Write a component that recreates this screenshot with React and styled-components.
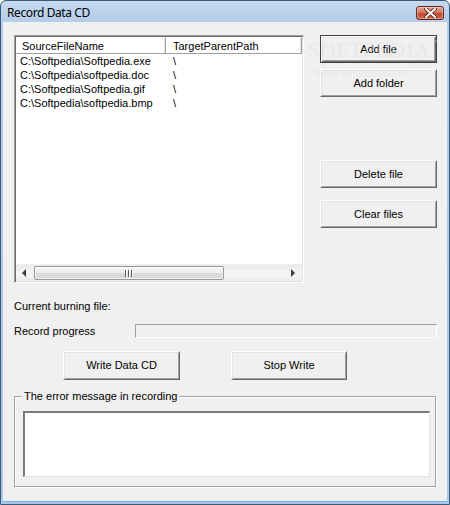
import React from "react";
import styled, { createGlobalStyle, css } from "styled-components";

const Global = createGlobalStyle`
  html, body { margin: 0; padding: 0; background: #ffffff; }
  body { font-family: "Liberation Sans", Arial, sans-serif; font-size: 11px; color: #000; }
  * { box-sizing: border-box; }
`;

const Window = styled.div`
  position: relative;
  width: 450px;
  height: 505px;
  display: flex;
  flex-direction: column;
  background: linear-gradient(#c6d9ee, #b4cce7 22px, #a9c6e8);
  border: 1px solid #3b5a7c;
  border-radius: 6px 6px 0 0;
  padding: 0 2px 2px 2px;
  overflow: hidden;
`;

const TitleBar = styled.div`
  height: 21px;
  display: flex;
  align-items: center;
  justify-content: space-between;
  padding: 0 3px 0 4px;
`;

const Title = styled.span`
  font-family: "Noto Sans", "Liberation Sans", sans-serif;
  font-size: 12px;
  letter-spacing: -0.4px;
  color: #000;
  padding-top: 2px;
`;

const CloseButton = styled.div`
  width: 28px;
  height: 14px;
  margin-top: 3px;
  border: 1px solid #6b2418;
  border-radius: 3px;
  background: linear-gradient(#e6a595, #d47a64 45%, #c14a2e 55%, #c96a4e);
  box-shadow: inset 0 0 0 1px rgba(255, 255, 255, 0.35);
  display: flex;
  align-items: center;
  justify-content: center;
`;

const Client = styled.div`
  flex: 1;
  background: #f0f0f0;
  padding: 13px 10px 0 11px;
  display: flex;
  flex-direction: column;
  border-bottom: 1px solid #72b5e4;
`;

const TopRow = styled.div`
  display: flex;
  height: 248px;
`;

const ListView = styled.div`
  width: 290px;
  height: 248px;
  background: #fff;
  border-top: 1px solid #a0a0a0;
  border-left: 1px solid #a0a0a0;
  border-right: 1px solid #ffffff;
  border-bottom: 1px solid #ffffff;
  box-shadow: inset 1px 1px 0 #696969, inset -1px -1px 0 #e3e3e3;
  padding: 1px;
  display: flex;
  flex-direction: column;
`;

const HeaderRow = styled.div`
  display: flex;
  height: 17px;
  background: #f0f0f0;
  border-bottom: 1px solid #a0a0a0;
`;

const HeaderCell = styled.div`
  width: ${(p) => p.$w}px;
  flex: ${(p) => (p.$grow ? 1 : "none")};
  padding-left: ${(p) => p.$pad}px;
  line-height: 16px;
  background: #ffffff;
  border-top: 1px solid #ffffff;
  border-right: 1px solid #a0a0a0;
  box-shadow: inset -1px 0 0 #e3e3e3;
  white-space: nowrap;
  overflow: hidden;
`;

const Rows = styled.div`
  flex: 1;
`;

const Row = styled.div`
  display: flex;
  height: 14px;
  line-height: 14px;
`;

const Cell = styled.div`
  width: ${(p) => p.$w}px;
  padding-left: ${(p) => p.$pad}px;
  white-space: nowrap;
`;

const HScroll = styled.div`
  height: 17px;
  display: flex;
  align-items: stretch;
  background: linear-gradient(#e9e9e9, #f3f3f3 40%, #f3f3f3 70%, #e9e9e9);
  border-top: 1px solid #f0f0f0;
`;

const ArrowBox = styled.div`
  width: 17px;
  display: flex;
  align-items: center;
  justify-content: center;
`;

const Track = styled.div`
  flex: 1;
  display: flex;
  align-items: stretch;
  padding: 1px 0;
`;

const Thumb = styled.div`
  width: 190px;
  margin-left: 1px;
  border: 1px solid #979797;
  border-radius: 2px;
  background: linear-gradient(#f6f6f6, #ececec 50%, #dcdcdc 51%, #d7d7d7);
  box-shadow: inset 0 0 0 1px rgba(255, 255, 255, 0.7);
  display: flex;
  align-items: center;
  justify-content: center;
`;

const Grip = styled.div`
  display: flex;
  gap: 1px;
`;

const GripLine = styled.div`
  width: 2px;
  height: 7px;
  background: #5a5a5a;
  border-right: 1px solid #ffffff;
`;

const ButtonColumn = styled.div`
  margin-left: 16px;
  width: 117px;
  display: flex;
  flex-direction: column;
`;

const Button = styled.div`
  width: ${(p) => p.$w || 117}px;
  height: ${(p) => p.$h || 28}px;
  margin-top: ${(p) => p.$mt || 0}px;
  background: #f0f0f0;
  border-top: 1px solid #ffffff;
  border-left: 1px solid #ffffff;
  border-right: 1px solid #696969;
  border-bottom: 1px solid #696969;
  box-shadow: inset 1px 1px 0 #e3e3e3, inset -1px -1px 0 #a0a0a0;
  display: flex;
  align-items: center;
  justify-content: center;
  font-size: 11px;
  padding-bottom: 1px;
  ${(p) =>
    p.$default &&
    css`
      border: 1px solid #404040;
      box-shadow: inset 1px 1px 0 #ffffff, inset -1px -1px 0 #696969,
        inset 2px 2px 0 #e3e3e3, inset -2px -2px 0 #a0a0a0;
    `}
`;

const Label = styled.div`
  margin-top: ${(p) => p.$mt || 0}px;
  width: ${(p) => (p.$w ? `${p.$w}px` : "auto")};
  flex: none;
  line-height: 13px;
  height: 13px;
  white-space: nowrap;
`;

const ProgressRow = styled.div`
  display: flex;
  align-items: center;
  margin-top: 11px;
  height: 14px;
`;

const Progress = styled.div`
  width: 302px;
  height: 14px;
  background: #f0f0f0;
  border-top: 1px solid #a0a0a0;
  border-left: 1px solid #a0a0a0;
  border-right: 1px solid #ffffff;
  border-bottom: 1px solid #ffffff;
`;

const ActionRow = styled.div`
  display: flex;
  gap: 51px;
  margin-top: 13px;
  padding-left: 49px;
`;

const Group = styled.div`
  position: relative;
  margin-top: 16px;
  width: 422px;
  height: 91px;
  border: 1px solid #a0a0a0;
  box-shadow: inset 1px 1px 0 #ffffff, 1px 1px 0 #ffffff;
  padding: 14px 5px 9px 8px;
`;

const Legend = styled.div`
  position: absolute;
  left: 7px;
  top: -7px;
  padding: 0 2px;
  background: #f0f0f0;
  line-height: 13px;
`;

const MessageBox = styled.div`
  width: 407px;
  height: 66px;
  background: #ffffff;
  border-top: 2px solid #7a7a7a;
  border-left: 2px solid #7a7a7a;
  border-right: 1px solid #e3e3e3;
  border-bottom: 1px solid #e3e3e3;
`;

const Watermark = styled.div`
  position: absolute;
  left: 298px;
  top: 37px;
  width: 148px;
  pointer-events: none;
  color: rgba(220, 220, 220, 0.45);
  font-family: "Liberation Serif", serif;
  text-align: center;
`;

const WatermarkBig = styled.div`
  font-size: 22px;
  letter-spacing: 0.5px;
  line-height: 24px;
  white-space: nowrap;
`;

const Tm = styled.sup`
  font-size: 8px;
  vertical-align: top;
  line-height: 10px;
`;

const WatermarkSmall = styled.div`
  font-family: "Liberation Sans", sans-serif;
  font-size: 11px;
  line-height: 12px;
  margin-top: 4px;
  margin-left: -22px;
`;

const files = [
  "C:\\Softpedia\\Softpedia.exe",
  "C:\\Softpedia\\softpedia.doc",
  "C:\\Softpedia\\Softpedia.gif",
  "C:\\Softpedia\\softpedia.bmp",
];

const LeftArrow = () => (
  <svg width="5" height="8" viewBox="0 0 5 8">
    <path d="M4 0 L0 4 L4 8 Z" fill="#3c3c3c" />
  </svg>
);

const RightArrow = () => (
  <svg width="5" height="8" viewBox="0 0 5 8">
    <path d="M0 0 L4 4 L0 8 Z" fill="#3c3c3c" />
  </svg>
);

const CloseGlyph = () => (
  <svg width="13" height="10" viewBox="0 0 13 10">
    <path
      d="M2 1 L11 9 M11 1 L2 9"
      stroke="#5a2014"
      strokeWidth="3.6"
      strokeLinecap="square"
    />
    <path
      d="M2 1 L11 9 M11 1 L2 9"
      stroke="#ffffff"
      strokeWidth="2"
      strokeLinecap="square"
    />
  </svg>
);

export default function App() {
  return (
    <>
      <Global />
      <Window>
        <TitleBar>
          <Title>Record Data CD</Title>
          <CloseButton>
            <CloseGlyph />
          </CloseButton>
        </TitleBar>
        <Client>
          <TopRow>
            <ListView>
              <HeaderRow>
                <HeaderCell $w={150} $pad={6}>SourceFileName</HeaderCell>
                <HeaderCell $w={138} $pad={7} $grow>TargetParentPath</HeaderCell>
              </HeaderRow>
              <Rows>
                {files.map((f) => (
                  <Row key={f}>
                    <Cell $w={152} $pad={4}>{f}</Cell>
                    <Cell $w={120} $pad={5}>\</Cell>
                  </Row>
                ))}
              </Rows>
              <HScroll>
                <ArrowBox>
                  <LeftArrow />
                </ArrowBox>
                <Track>
                  <Thumb>
                    <Grip>
                      <GripLine />
                      <GripLine />
                      <GripLine />
                    </Grip>
                  </Thumb>
                </Track>
                <ArrowBox>
                  <RightArrow />
                </ArrowBox>
              </HScroll>
            </ListView>
            <ButtonColumn>
              <Button $default>Add file</Button>
              <Button $mt={6}>Add folder</Button>
              <Button $mt={63}>Delete file</Button>
              <Button $mt={12}>Clear files</Button>
            </ButtonColumn>
          </TopRow>
          <Label $mt={17}>Current burning file:</Label>
          <ProgressRow>
            <Label $w={121}>Record progress</Label>
            <Progress />
          </ProgressRow>
          <ActionRow>
            <Button $h={29}>Write Data CD</Button>
            <Button $h={29} $w={116}>Stop Write</Button>
          </ActionRow>
          <Group>
            <Legend>The error message in recording</Legend>
            <MessageBox />
          </Group>
        </Client>
        <Watermark>
          <WatermarkBig>
            SOFTPEDIA<Tm>™</Tm>
          </WatermarkBig>
          <WatermarkSmall>www.softpedia.com</WatermarkSmall>
        </Watermark>
      </Window>
    </>
  );
}
